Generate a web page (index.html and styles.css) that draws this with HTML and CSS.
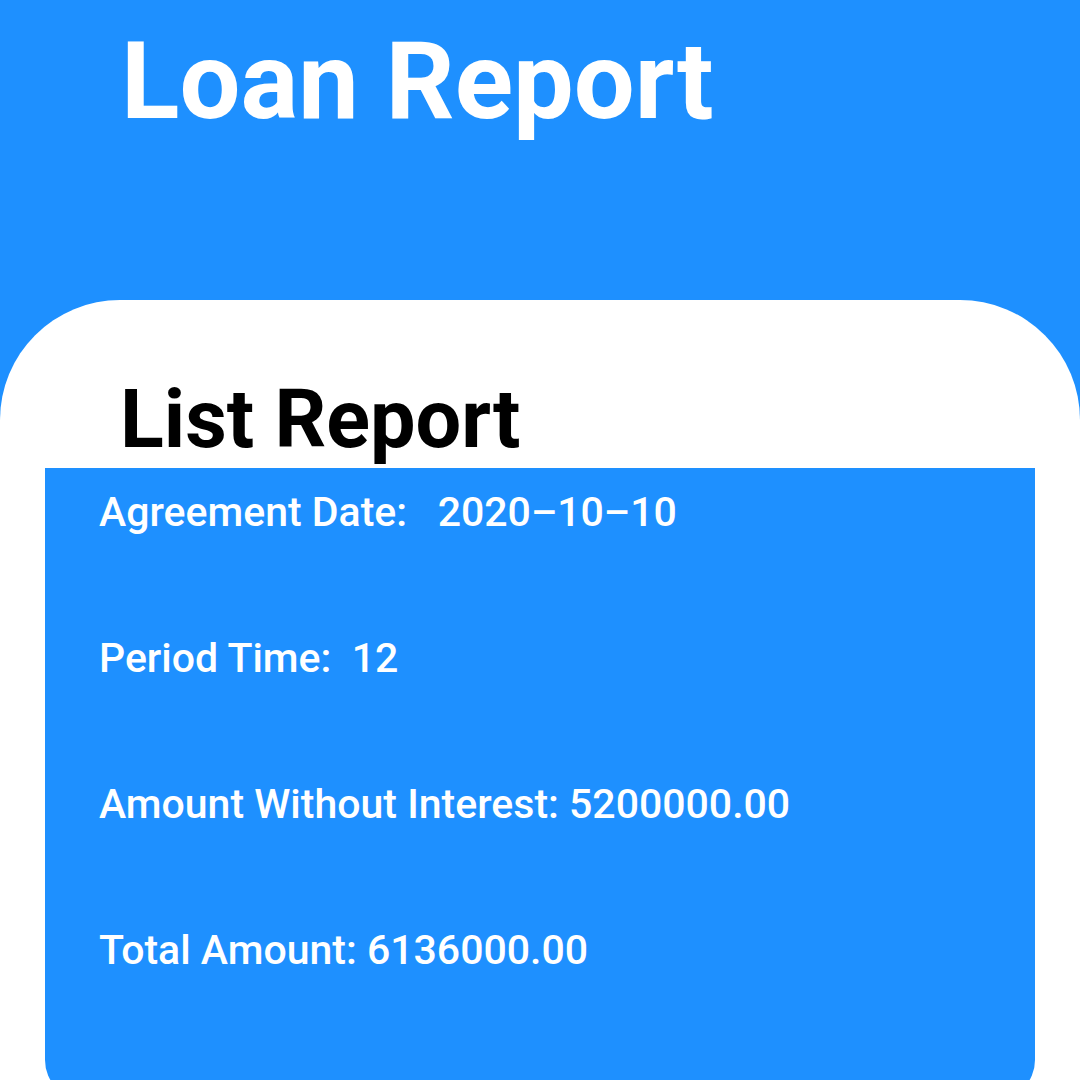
FILE: index.html
```html
<!DOCTYPE html>
<html lang="en">
<head>
<meta charset="utf-8">
<title>Loan Report</title>
<link rel="stylesheet" href="styles.css">
</head>
<body>
<div class="screen">
  <header class="header">
    <h1 class="title">Loan Report</h1>
  </header>
  <main class="card">
    <h2 class="subtitle">List Report</h2>
    <section class="panel">
      <p class="row">Agreement Date:   2020–10–10</p>
      <p class="row">Period Time:  12</p>
      <p class="row">Amount Without Interest: 5200000.00</p>
      <p class="row">Total Amount: 6136000.00</p>
    </section>
  </main>
</div>
</body>
</html>
```

FILE: styles.css
```css
html, body {
  margin: 0;
  padding: 0;
}
body {
  background: #1e90ff;
  font-family: Roboto, "Noto Sans", sans-serif;
  overflow: hidden;
}
.screen {
  width: 1080px;
  height: 1080px;
  overflow: hidden;
  display: flex;
  flex-direction: column;
}
.header {
  height: 300px;
  flex: none;
  padding: 27px 0 0 121px;
  box-sizing: border-box;
}
.title {
  margin: 0;
  font-size: 108px;
  line-height: 1;
  font-weight: 700;
  color: #ffffff;
}
.card {
  flex: none;
  height: 900px;
  background: #ffffff;
  border-radius: 120px 120px 0 0;
  padding-top: 79px;
  box-sizing: border-box;
}
.subtitle {
  margin: 0 0 8px 120px;
  font-size: 81px;
  line-height: 1;
  font-weight: 700;
  color: #000000;
}
.panel {
  margin: 0 45px;
  height: 632px;
  background: #1e90ff;
  border-radius: 0 0 40px 40px;
  padding: 24px 0 0 54px;
  box-sizing: border-box;
  display: flex;
  flex-direction: column;
  gap: 105px;
}
.row {
  margin: 0;
  font-size: 41px;
  line-height: 1;
  font-weight: 500;
  color: #ffffff;
  white-space: pre;
}
```
